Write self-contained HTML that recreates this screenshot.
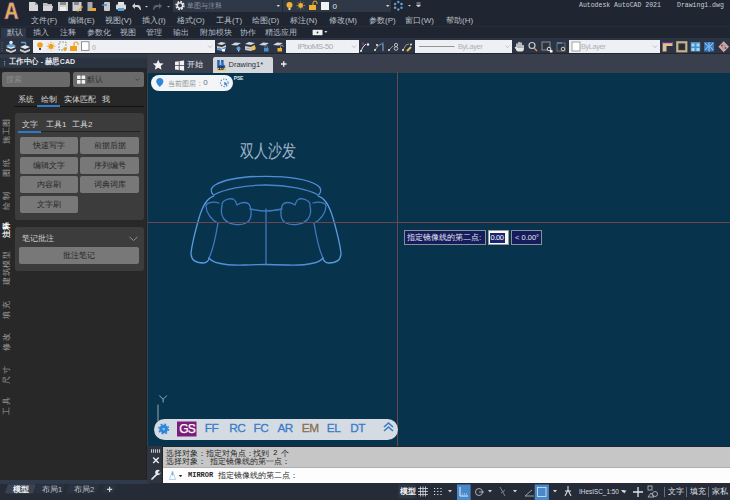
<!DOCTYPE html>
<html><head><meta charset="utf-8">
<style>
*{margin:0;padding:0;box-sizing:border-box}
html,body{width:730px;height:500px;overflow:hidden;background:#1f2631;font-family:"Liberation Sans",sans-serif;}
.a{position:absolute}
.t{position:absolute;white-space:nowrap;line-height:1}
#top{left:0;top:0;width:730px;height:26px;background:#1f2631}
#rtabs{left:0;top:26px;width:730px;height:12px;background:#1f2531;border-top:1px solid #262d38}
#tbar{left:0;top:38px;width:730px;height:15px;background:#2c3444}
#gap{left:0;top:53px;width:730px;height:1px;background:#20262f}
#phead{left:0;top:53.5px;width:147.5px;height:14.5px;background:#333b49;border-bottom:0}
#panel{left:0;top:68px;width:147px;height:412px;background:#282828;border-top:3px solid #22262c}
#ftabs{left:147px;top:53.5px;width:583px;height:19.5px;background:#393f4d}
#draw{left:148px;top:72.5px;width:582px;height:373.5px;background:#07344c;overflow:hidden}
#cmd{left:163px;top:447px;width:567px;height:21px;background:#c6c6c6;border-bottom:1px solid #b0b0b0}
#status{left:0;top:483px;width:730px;height:17px;background:#252c37}
.menu{color:#bcc1c8;font-size:8px}
.rt{color:#b4bac2;font-size:8px}
.combo{background:#eef0f3;}
.btn{position:absolute;background:#787878;border-radius:2px;color:#262626;font-size:8px;text-align:center;line-height:17px}
</style></head><body>
<!-- bars -->
<div id="top" class="a"></div>
<div id="rtabs" class="a"></div>
<div id="tbar" class="a"></div>
<div id="gap" class="a"></div>
<div id="ftabs" class="a"></div>
<div id="phead" class="a"></div>
<div class="a" style="left:0;top:57.5px;width:147px;height:11px;background:#2b3341"></div>
<div id="panel" class="a"></div>
<div id="draw" class="a"></div>
<div class="a" style="left:146px;top:73px;width:1px;height:407px;background:#222"></div><div class="a" style="left:147px;top:73px;width:1px;height:373px;background:#34434c"></div>
<div id="cmd" class="a"></div>
<div id="status" class="a"></div>
<div class="a" style="left:0;top:480px;width:149px;height:3.5px;background:#2f3a4b"></div>

<!-- logo -->
<svg class="a" style="left:0;top:0" width="26" height="24"><path d="M4.5 19L9.3 2.5h4.2L18.5 19h-3.4l-1.2-4.3H9.1L7.9 19zM10 11.8h3.2L11.6 6z" fill="#d8b455" fill-rule="evenodd" stroke="#7a2a9a" stroke-width="0.6"/></svg>

<!-- QAT -->
<div class="a" style="left:173px;top:0;width:109px;height:12px;background:#2f3847"></div>
<div class="a" style="left:283px;top:0;width:108px;height:12px;background:#2f3847"></div>
<div class="t" style="left:187px;top:2.3px;font-size:7.2px;color:#8a94a0">草图与注释</div>


<svg class="a" style="left:0;top:0" width="730" height="56" viewBox="0 0 730 56">
<!-- QAT icons -->
<!-- new -->
<path d="M29 2h6l3 3v6h-9z" fill="#d6d6d6"/><path d="M35 2v3h3" fill="#9a9a9a"/>
<!-- open -->
<path d="M43 3h4l1 1h4v2h-9z" fill="#bdbdbd"/><path d="M43 6h10l-1 5h-9z" fill="#d6d6d6"/>
<!-- save -->
<rect x="58" y="2" width="10" height="9" fill="#cfcfcf"/><rect x="60" y="2" width="6" height="3" fill="#8a8a8a"/><rect x="60" y="7" width="6" height="4" fill="#eee"/>
<!-- saveas -->
<rect x="72.5" y="2" width="9" height="9" fill="#cfcfcf"/><rect x="74" y="2" width="5" height="3" fill="#8a8a8a"/><path d="M77 11l5-5 1 1-5 5z" fill="#e8a53a"/>
<!-- publish -->
<rect x="87.5" y="2" width="5" height="9" fill="#aaa"/><path d="M90 8h6v3h-6z" fill="#e8a53a"/>
<!-- phone -->
<rect x="104" y="2" width="6" height="9" rx="1" fill="#c8c8c8"/><path d="M102 5h5" stroke="#3b8fd8" stroke-width="1.5"/>
<!-- print -->
<rect x="118" y="2" width="6" height="3" fill="#e6e6e6"/><rect x="116" y="4.5" width="10" height="5" rx="1" fill="#dcdcdc"/><rect x="118" y="8" width="6" height="3" fill="#5aa0e0"/>
<!-- undo -->
<path d="M132 6l3-3v2h3c2 0 3 2 3 5l-1 0c-1-2-2-3-3-3h-2v2z" fill="#d0d0d0"/>
<path d="M145 6h3l-1.5 1.5z" fill="#cfcfcf"/>
<path d="M162 6l-3-3v2h-3c-2 0-3 2-3 5l1 0c1-2 2-3 3-3h2v2z" fill="#5a6270"/>
<path d="M167 6h3l-1.5 1.5z" fill="#a0a4aa"/>
<!-- gear -->
<circle cx="180" cy="5.5" r="3.6" fill="none" stroke="#e8e8e8" stroke-width="2.2" stroke-dasharray="1.6 1.2"/>
<circle cx="180" cy="5.5" r="2.6" fill="none" stroke="#e8e8e8" stroke-width="1.4"/>
<path d="M276.5 5h3.5l-1.75 2z" fill="#d6d6d6"/>
<rect x="282" y="0" width="1" height="12" fill="#1f2631"/>
<!-- bulb sun lock -->
<circle cx="289.5" cy="5" r="3" fill="#f0b030"/><rect x="288.5" y="8" width="2" height="2" fill="#ddd"/>
<circle cx="300.7" cy="5.5" r="2.4" fill="#f0b030"/><path d="M303.70 5.50L304.70 5.50M302.82 7.62L303.53 8.33M300.70 8.50L300.70 9.50M298.58 7.62L297.87 8.33M297.70 5.50L296.70 5.50M298.58 3.38L297.87 2.67M300.70 2.50L300.70 1.50M302.82 3.38L303.53 2.67" stroke="#f0b030" stroke-width="0.9"/>
<rect x="309" y="5" width="7" height="5" fill="#f0b030"/><path d="M313 5v-2a2 2 0 0 1 4 0v1" stroke="#f0b030" fill="none" stroke-width="1"/>
<rect x="321" y="2" width="8" height="8" fill="#f2f2f2"/>
<text x="332.5" y="8.8" font-size="8" fill="#e0e0e0" font-family="Liberation Sans">0</text>
<path d="M386 5h3.5l-1.75 2z" fill="#d6d6d6"/>
<!-- network -->
<circle cx="398.30" cy="2.10" r="1.25" fill="#5a9ad8"/><circle cx="401.50" cy="3.95" r="1.25" fill="#6aa8e0"/><circle cx="401.50" cy="7.65" r="1.25" fill="#5a9ad8"/><circle cx="398.30" cy="9.50" r="1.25" fill="#5a9ad8"/><circle cx="395.10" cy="7.65" r="1.25" fill="#8a9ab0"/><circle cx="395.10" cy="3.95" r="1.25" fill="#5a9ad8"/>
<path d="M408 5h3l-1.5 1.5z" fill="#cfcfcf"/>
<path d="M416.5 3h4M416.5 5h4l-2 2z" stroke="#cfcfcf" fill="#cfcfcf" stroke-width="0.8"/>
</svg>

<!-- title -->
<div class="t" style="left:579px;top:3px;font-family:'Liberation Mono',monospace;font-size:6.5px;color:#c9ced6">Autodesk AutoCAD 2021</div>
<div class="t" style="left:677px;top:3px;font-family:'Liberation Mono',monospace;font-size:6.5px;color:#c9ced6">Drawing1.dwg</div>

<!-- menu -->
<div class="t menu" style="left:31px;top:16.5px">文件(F)</div>
<div class="t menu" style="left:68px;top:16.5px">编辑(E)</div>
<div class="t menu" style="left:105px;top:16.5px">视图(V)</div>
<div class="t menu" style="left:142px;top:16.5px">插入(I)</div>
<div class="t menu" style="left:177px;top:16.5px">格式(O)</div>
<div class="t menu" style="left:216px;top:16.5px">工具(T)</div>
<div class="t menu" style="left:252px;top:16.5px">绘图(D)</div>
<div class="t menu" style="left:290px;top:16.5px">标注(N)</div>
<div class="t menu" style="left:329px;top:16.5px">修改(M)</div>
<div class="t menu" style="left:369px;top:16.5px">参数(P)</div>
<div class="t menu" style="left:405px;top:16.5px">窗口(W)</div>
<div class="t menu" style="left:446px;top:16.5px">帮助(H)</div>

<!-- ribbon tabs -->
<div class="a" style="left:1px;top:27.5px;width:25px;height:10.5px;background:#2e3848"></div>
<div class="t rt" style="left:7px;top:29px">默认</div>
<div class="t rt" style="left:33px;top:29px">插入</div>
<div class="t rt" style="left:60px;top:29px">注释</div>
<div class="t rt" style="left:87px;top:29px">参数化</div>
<div class="t rt" style="left:120px;top:29px">视图</div>
<div class="t rt" style="left:146px;top:29px">管理</div>
<div class="t rt" style="left:173px;top:29px">输出</div>
<div class="t rt" style="left:200px;top:29px">附加模块</div>
<div class="t rt" style="left:240px;top:29px">协作</div>
<div class="t rt" style="left:265px;top:29px">精选应用</div>

<svg class="a" style="left:308px;top:28px" width="24" height="10"><rect x="4.6" y="1.8" width="9.9" height="5.4" fill="#f0f0f0"/><circle cx="9.5" cy="4.5" r="0.9" fill="#333"/><path d="M16.4 3h3l-1.5 2z" fill="#e0e0e0"/></svg>
<!-- toolbar combos -->
<div class="a combo" style="left:33px;top:40px;width:182px;height:13px"></div>
<div class="a combo" style="left:286px;top:40px;width:73px;height:13px"></div>
<div class="a combo" style="left:415px;top:40px;width:97px;height:13px"></div>
<div class="a combo" style="left:569px;top:40px;width:91px;height:13px"></div>
<div class="t" style="left:297.5px;top:43.2px;font-size:8px;letter-spacing:-0.55px;color:#a4a8ae">IPboMS-50</div>
<div class="t" style="left:458px;top:43px;font-size:7.5px;letter-spacing:-0.45px;color:#aeb2b8">ByLayer</div>
<div class="t" style="left:581px;top:43px;font-size:7.5px;letter-spacing:-0.45px;color:#aeb2b8">ByLayer</div>


<svg class="a" style="left:0;top:0" width="730" height="56" viewBox="0 0 730 56">
<!-- grip -->
<path d="M2 42v10" stroke="#5a6270" stroke-width="1" stroke-dasharray="1 1"/>
<!-- layer props icons -->
<path d="M6 47l5-2 5 2-5 2z" fill="#e8e8e8"/><path d="M6 49l5 2 5-2v2l-5 2-5-2z" fill="#d0d0d0"/><path d="M6 45.5l5-2 5 2-5 2z" fill="#5aa0e0"/><circle cx="11" cy="42.5" r="1.8" fill="#e8e8e8"/>
<path d="M20 47l5-2 5 2-5 2z" fill="#e8e8e8"/><path d="M20 49l5 2 5-2v2l-5 2-5-2z" fill="#d0d0d0"/><path d="M21 42.5h4l1 2" stroke="#5aa0e0" fill="none" stroke-width="1.4"/>
<!-- in combo -->
<circle cx="40" cy="45" r="2.8" fill="#f0a020"/><rect x="39" y="48" width="2" height="2" fill="#444"/>
<circle cx="51" cy="46.3" r="2.6" fill="#f0a020"/><path d="M54.20 46.30L55.40 46.30M53.26 48.56L54.11 49.41M51.00 49.50L51.00 50.70M48.74 48.56L47.89 49.41M47.80 46.30L46.60 46.30M48.74 44.04L47.89 43.19M51.00 43.10L51.00 41.90M53.26 44.04L54.11 43.19" stroke="#f0a020" stroke-width="1"/>
<rect x="59" y="42" width="7" height="8" fill="none" stroke="#888" stroke-width="0.8" stroke-dasharray="2 1"/><circle cx="65" cy="49" r="1.8" fill="#f0a020"/>
<rect x="70" y="46" width="7" height="5" fill="#f0a020"/><path d="M74 46v-2a2 2 0 0 1 4 0v1" stroke="#f0a020" fill="none" stroke-width="1.2"/>
<rect x="81.5" y="41.8" width="7.5" height="8.5" fill="#fff" stroke="#666" stroke-width="0.7"/>
<text x="92" y="49.5" font-size="7" fill="#aaa" font-family="Liberation Sans">0</text>
<path d="M208 45.6l2 2 2-2" stroke="#a8acb2" fill="none" stroke-width="0.7"/>
<!-- layer tool icons -->
<path d="M217 44l4-2 5 1-4 2z" fill="#ddd"/><path d="M217 46l5 1 4-2v2l-4 2-5-1z" fill="#ccc"/><path d="M217 48l5 1 4-2v2l-4 2-5-1z" fill="#5aa0e0"/><rect x="222" y="49" width="3" height="2.5" fill="#fff"/>
<path d="M231 45l4-2.5 6 0.5-4 2.5z" fill="#d6d6d6"/><circle cx="238.5" cy="48.5" r="2" fill="#5aa0e0"/><rect x="238" y="50" width="1.2" height="1.5" fill="#ddd"/>
<path d="M245 44l4-2 6 1-4 2z" fill="#ddd"/><path d="M245 46l6 1 4-2v2l-4 2-6-1z" fill="#ccc"/><path d="M245 48l6 1 4-2v2l-4 2-6-1z" fill="#ccc"/><circle cx="253.5" cy="48" r="2.2" fill="#f0c040"/>
<path d="M259 45l4-2.5 6 0.5-4 2.5z" fill="#d6d6d6"/><rect x="264" y="48" width="4.5" height="3.5" fill="#4a90d0"/><path d="M265 48v-1.2a1.2 1.2 0 0 1 2.4 0v1.2" stroke="#4a90d0" fill="none" stroke-width="0.8"/>
<path d="M273 45l4-2.5 6 0.5-4 2.5z" fill="#d6d6d6"/><rect x="277.5" y="48" width="4.5" height="3.5" fill="#f0b030"/><path d="M280.5 48v-1.5a1.3 1.3 0 0 1 2.6 0v0.5" stroke="#aaa" fill="none" stroke-width="0.8"/>
<path d="M352 45.6l2 2 2-2" stroke="#a8acb2" fill="none" stroke-width="0.7"/>
<!-- misc icons -->
<path d="M361 51l2-4 3-3" stroke="#ddd" fill="none" stroke-width="1"/><circle cx="363" cy="44" r="1.4" fill="#8a3070"/><circle cx="368" cy="44.5" r="1.2" fill="#eee"/><circle cx="361" cy="51" r="1" fill="#eee"/>
<path d="M375 50l3-4 3-2 2 0v7" stroke="#aaa" fill="none" stroke-width="0.8"/><path d="M383 42v9" stroke="#4a90d0" stroke-width="0.8"/><circle cx="375" cy="50" r="1" fill="#eee"/><circle cx="377" cy="45" r="1" fill="#eee"/>
<path d="M389 50l4-4" stroke="#aaa" fill="none" stroke-width="0.8"/><circle cx="389" cy="50" r="1" fill="#eee"/><circle cx="396" cy="45" r="1.6" fill="none" stroke="#ccc" stroke-width="0.9"/><circle cx="396" cy="48.5" r="1.8" fill="none" stroke="#ccc" stroke-width="0.9"/>
<path d="M403 50l3-5 3-1" stroke="#aaa" fill="none" stroke-width="0.8"/><circle cx="403" cy="50" r="1" fill="#eee"/><path d="M407 51l4-4" stroke="#f0c040" stroke-width="1.8"/><circle cx="411" cy="44.5" r="1" fill="#eee"/>
<!-- linetype combo -->
<path d="M419 46.5h35.5" stroke="#8a8a8a" stroke-width="0.9"/>
<path d="M505.5 45.6l2 2 2-2" stroke="#a8acb2" fill="none" stroke-width="0.7"/>
<!-- hand -->
<g stroke="#e6e6e6" stroke-linecap="round" stroke-width="1.5" fill="none"><path d="M517 48v-4M519 47.5v-5M521 47.5v-4.5M523 48.5v-3M515.5 47.5l1.5 2"/></g><path d="M516 48h7.8v1.5c0 1-1 2-2 2h-3.5c-1 0-2-1-2.3-2z" fill="#e6e6e6"/>
<circle cx="532" cy="45.5" r="3" fill="none" stroke="#ccc" stroke-width="1.2"/><path d="M534 48l3 3" stroke="#d0a060" stroke-width="1.3"/>
<rect x="542" y="42" width="8" height="8" fill="none" stroke="#999" stroke-width="0.9"/><circle cx="549" cy="49" r="1.8" fill="#333" stroke="#eee" stroke-width="0.9"/><rect x="550" y="50" width="2.5" height="2.5" fill="#fff"/>
<rect x="557" y="43" width="8" height="8" fill="none" stroke="#777" stroke-width="0.9"/><path d="M557 43h5" stroke="#4a90d0" stroke-width="1.4"/><circle cx="563" cy="49" r="1.8" fill="#333" stroke="#ddd" stroke-width="0.9"/>
<!-- color combo -->
<rect x="572" y="42" width="8" height="9" fill="#fff" stroke="#999" stroke-width="0.9"/>
<path d="M653 45.6l2 2 2-2" stroke="#a8acb2" fill="none" stroke-width="0.7"/>
<!-- right icons -->
<path d="M662.5 42h10v4h-6v5.5h-4z" fill="#dcc490"/><path d="M662.5 42h10v1.2h-10z" fill="#6a2a8a"/><path d="M662.5 42v9.5" stroke="#7a3a8a" stroke-width="0.6"/>
<rect x="677.3" y="42.3" width="9" height="9" fill="none" stroke="#c8b08a" stroke-width="2.2"/><rect x="679.6" y="44.6" width="4.4" height="4.4" fill="#2a2a30"/>
<rect x="690.7" y="42" width="9.6" height="9.5" fill="#4a90c8"/><path d="M691.5 43.5h3v3h-3zM696.5 43.5h3v3h-3zM691.5 48h3v3h-3zM696.5 48h3v3h-3z" fill="#a8d8f0"/>
<rect x="704.1" y="42" width="10" height="9.5" fill="#3a7cc4"/><path d="M705 43l3 3.5-3 3.5M713 43l-3 3.5 3 3.5M709 42.5v9" stroke="#a0d0f0" stroke-width="1" fill="none"/>
<path d="M723.7 41.2l5.3 5.5-5.3 5.5-5.3-5.5z" fill="#c8aca4"/><circle cx="722" cy="45.5" r="1" fill="#8a3a8a"/><circle cx="725.5" cy="48" r="1" fill="#8a3a8a"/><circle cx="723.7" cy="46.7" r="1.6" fill="none" stroke="#9a7070" stroke-width="0.6"/>
</svg>

<!-- panel header -->
<div class="t" style="left:9px;top:58px;font-size:7.5px;color:#e4e8ec;font-weight:bold;transform-origin:0 0;transform:scaleX(0.93)">工作中心 - 赫思CAD</div>

<!-- panel content -->
<div class="a" style="left:2px;top:72px;width:68px;height:15px;background:#6a6a6a;border-radius:2px"></div>
<div class="t" style="left:6px;top:76px;font-size:8px;color:#8c8c8c">搜索</div>
<div class="a" style="left:73px;top:72px;width:71px;height:15px;background:#6a6a6a;border-radius:2px"></div>
<div class="t" style="left:87px;top:76px;font-size:8px;color:#333">默认</div>
<svg class="a" style="left:72px;top:72px" width="75" height="16"><rect x="5" y="3.5" width="3.6" height="3.6" rx="0.6" fill="#f0f0f0"/><rect x="9.6" y="3.5" width="3.6" height="3.6" rx="0.6" fill="#f0f0f0"/><rect x="5" y="8.1" width="3.6" height="3.6" rx="0.6" fill="#f0f0f0"/><rect x="9.6" y="8.1" width="3.6" height="3.6" rx="0.6" fill="#f0f0f0"/><path d="M63.5 6.5l2 2 2-2" stroke="#3a3a3a" stroke-width="0.8" fill="none"/></svg>
<svg class="a" style="left:2px;top:60px" width="5" height="7"><path d="M2.5 1v5" stroke="#8a94a0" stroke-width="1.2" stroke-dasharray="1 0.8"/></svg>
<div class="t" style="left:18px;top:96px;font-size:8px;color:#d8d8d8">系统</div>
<div class="t" style="left:41px;top:96px;font-size:8px;color:#d8d8d8">绘制</div>
<div class="t" style="left:64px;top:96px;font-size:8px;color:#d8d8d8">实体匹配</div>
<div class="t" style="left:102px;top:96px;font-size:8px;color:#d8d8d8">我</div>
<div class="a" style="left:14px;top:106px;width:130px;height:1px;background:#111"></div>
<div class="a" style="left:37px;top:105px;width:23px;height:2px;background:#2f7ac8"></div>

<div class="a" style="left:15px;top:113px;width:129px;height:107px;background:#3c3c3c;border-radius:3px"></div>
<div class="t" style="left:22px;top:121px;font-size:8px;color:#d8d8d8">文字</div>
<div class="t" style="left:46px;top:121px;font-size:8px;color:#d8d8d8">工具1</div>
<div class="t" style="left:72px;top:121px;font-size:8px;color:#d8d8d8">工具2</div>
<div class="a" style="left:18px;top:131px;width:122px;height:1px;background:#222"></div>
<div class="a" style="left:18px;top:131px;width:23px;height:2px;background:#2f7ac8"></div>
<div class="btn" style="left:20px;top:137px;width:58px;height:17px">快速写字</div>
<div class="btn" style="left:80px;top:137px;width:59px;height:17px">前据后据</div>
<div class="btn" style="left:20px;top:157px;width:58px;height:17px">编辑文字</div>
<div class="btn" style="left:80px;top:157px;width:59px;height:17px">序列编号</div>
<div class="btn" style="left:20px;top:176px;width:58px;height:17px">内容刷</div>
<div class="btn" style="left:80px;top:176px;width:59px;height:17px">词典词库</div>
<div class="btn" style="left:20px;top:196px;width:58px;height:17px">文字刷</div>

<div class="a" style="left:15px;top:227px;width:129px;height:44px;background:#3c3c3c;border-radius:3px"></div>
<div class="t" style="left:21.5px;top:235px;font-size:8px;color:#d0d0d0">笔记批注</div>
<div class="btn" style="left:19px;top:247px;width:120px;height:17px">批注笔记</div>
<svg class="a" style="left:128px;top:235px" width="12" height="8"><path d="M1.5 2l4 3.5 4-3.5" stroke="#9a9a9a" stroke-width="0.9" fill="none"/></svg>

<!-- drawing -->
<svg class="a" style="left:148px;top:72px" width="582" height="374" viewBox="148 72 582 374">
<g fill="none" stroke="#4f8fd6" stroke-width="1.3" stroke-linecap="round" stroke-linejoin="round">
<g id="half">
<path d="M266 176.3 C248 176.3 226 178.5 215 185 C211 187.5 210 191 213 194.5"/>
<path d="M213.5 195 C224 189.5 244 185 266 185" stroke="#4a84c8"/>
<path d="M214 196 C207 198 203 205 199 218 C195 232 192 244 191 253 C191 259 195 263 203 263 C207 263 209 260 209 258" stroke="#5a9ae0"/>
<path d="M219 203 C212 201 206 203 206 206 C206 212 211 220 218 223" stroke="#3f78bd"/>
<path d="M218 223 C216 235 213 250 209 258" stroke="#3f78bd"/>
<path d="M209 258 C213 263.5 228 265.5 245 265 C254 264.7 260 264.5 266 264.5"/>
<path d="M222 206 C221 201 228 198 233 199 C236 200 236 203 237 205 C241 202 248 201 250 206 C252 212 252 220 246 223 C240 226 229 225 224 219 C221 215 221 210 222 206 Z" stroke="#3f78bd"/>
<path d="M250 209 C255 210 261 211 266 211" stroke="#3f78bd"/>
</g>
<use href="#half" transform="translate(532,0) scale(-1,1)"/>
<path d="M266 209 V264" stroke="#3f78bd"/>
</g>
<rect x="397" y="72" width="1" height="374" fill="#6c4552"/>
<rect x="148" y="222" width="582" height="1" fill="#6c4552"/>
<path d="M158 404.5 V421" stroke="#b8c4d0" stroke-width="0.8"/>
<path d="M159.3 395.5l3.8 3.8 3.8-3.8M163.1 399.3v3.2" stroke="#c0ccd8" stroke-width="0.8" fill="none"/>
</svg>
<div class="t" style="left:240px;top:141.8px;font-size:14px;color:#a0b2c8;transform-origin:0 0;transform:scaleY(1.28)">双人沙发</div>
<!-- file tabs -->
<div class="a" style="left:213px;top:57px;width:60px;height:16px;background:#d4d8dd;border-radius:2px 2px 0 0"></div>
<div class="t" style="left:228.5px;top:61px;font-size:7.5px;color:#2a2f38">Drawing1*</div>
<div class="t" style="left:187px;top:61px;font-size:7.5px;color:#e8ecf0">开始</div>
<svg class="a" style="left:148px;top:53px" width="160" height="45" viewBox="148 53 160 45">
<path d="M158.2 59.8l1.6 3.4 3.8 0.4-2.9 2.5 0.9 3.7-3.4-2-3.4 2 0.9-3.7-2.9-2.5 3.8-0.4z" fill="#f4f4f4"/>
<path d="M175 61.8l3.8-0.6v4h-3.8zM179.6 61.1l4.5-0.7v4.8h-4.5zM175 66h3.8v4l-3.8-0.6zM179.6 66h4.5v4.8l-4.5-0.7z" fill="#f0f0f0"/>
<path d="M217.2 60h2.6v3h1.2v-3h2.6v4.5l1.6 1v3h-8z" fill="#2a64b0"/><rect x="219.5" y="62.5" width="2" height="2.5" fill="#8ab8e8"/><path d="M216.5 70.5l1.5-2.5h7l1.5 2.5z" fill="#f0c050"/>
<text x="217.8" y="70.3" font-size="5.5" fill="#111" font-family="Liberation Sans" font-weight="bold">10</text>
<path d="M281 64h5.5M283.75 61.25v5.5" stroke="#f0f0f0" stroke-width="1.3"/>
<rect x="151" y="75" width="82" height="16" rx="8" fill="#f3f5f7"/>
<path d="M159.8 78c2 0 3.6 1.5 3.6 3.4 0 2.2-2.2 3.6-3.6 5.6-1.4-2-3.6-3.4-3.6-5.6 0-1.9 1.6-3.4 3.6-3.4z" fill="#2f86d8"/>
<circle cx="224.3" cy="82.8" r="3.8" fill="none" stroke="#3a8ad8" stroke-width="1.1" stroke-dasharray="1.3 1.4"/>
<path d="M224 82l3.3 1.2-1.3 0.6 1.4 1.4-0.7 0.7-1.4-1.4-0.6 1.3z" fill="#2a7ad0"/>
<text x="233.8" y="79.8" font-size="5" fill="#dce4ec" font-family="Liberation Sans" font-weight="bold" letter-spacing="-0.2">PSE</text>
</svg>
<div class="t" style="left:167.5px;top:79.7px;font-size:7.2px;color:#8a8e94">当前图层</div><div class="t" style="left:198.8px;top:80px;font-size:7.5px;color:#7a7e84">:</div><div class="t" style="left:203.2px;top:79.3px;font-size:8px;color:#6a6e74">0</div>

<!-- tooltip -->
<div class="a" style="left:404px;top:230px;width:82px;height:15px;background:#141c5c;border:1px solid #8a8f9a"></div>
<div class="t" style="left:407px;top:233.5px;font-size:8px;color:#e6e8f0">指定镜像线的第二点:</div>
<div class="a" style="left:488px;top:230px;width:21px;height:15px;background:#fafafa;border:1px solid #9a9a9a"></div>
<div class="a" style="left:490px;top:232.5px;width:15px;height:10px;background:#1a2470"></div>
<div class="t" style="left:490.5px;top:234px;font-size:7.5px;color:#ffffff;letter-spacing:-0.4px">0.00</div>
<div class="a" style="left:511px;top:230px;width:31px;height:15px;background:#141c5c;border:1px solid #8a8f9a"></div>
<div class="t" style="left:515px;top:234px;font-size:7.5px;color:#e6e8f0">&lt; 0.00°</div>
<!-- pill toolbar -->
<div class="a" style="left:154px;top:418.5px;width:244px;height:21px;background:#d4dbe2;border-radius:10.5px"></div>
<svg class="a" style="left:154px;top:418px" width="244" height="22" viewBox="154 418 244 22">
<circle cx="163.7" cy="429" r="4.3" fill="#2f86d8"/><circle cx="163.7" cy="429" r="4.9" fill="none" stroke="#2f86d8" stroke-width="1.4" stroke-dasharray="1.9 1.95"/><circle cx="163.7" cy="429" r="1.3" fill="#8ec0f0"/>
<rect x="177" y="421.5" width="19.5" height="15" fill="#7a1c78"/>
<path d="M384 431l4.5-4 4.5 4M384 427l4.5-4 4.5 4" stroke="#3a7bc8" stroke-width="1.6" fill="none"/>
</svg>
<div class="t" style="left:179.3px;top:422.6px;font-size:12px;letter-spacing:-0.9px;-webkit-text-stroke:0.25px #fff;color:#ffffff">GS</div>
<div class="t" style="left:204.8px;top:423px;font-size:11.8px;letter-spacing:-0.5px;-webkit-text-stroke:0.3px #3a7bc8;color:#3a7bc8">FF</div>
<div class="t" style="left:229.2px;top:423px;font-size:11.8px;letter-spacing:-0.5px;-webkit-text-stroke:0.3px #3a7bc8;color:#3a7bc8">RC</div>
<div class="t" style="left:253.6px;top:423px;font-size:11.8px;letter-spacing:-0.5px;-webkit-text-stroke:0.3px #3a7bc8;color:#3a7bc8">FC</div>
<div class="t" style="left:277.5px;top:423px;font-size:11.8px;letter-spacing:-0.5px;-webkit-text-stroke:0.3px #3a7bc8;color:#3a7bc8">AR</div>
<div class="t" style="left:301.8px;top:423px;font-size:11.8px;letter-spacing:-0.5px;-webkit-text-stroke:0.3px #8a6e50;color:#8a6e50">EM</div>
<div class="t" style="left:326.8px;top:423px;font-size:11.8px;letter-spacing:-0.5px;-webkit-text-stroke:0.3px #3a7bc8;color:#3a7bc8">EL</div>
<div class="t" style="left:350.3px;top:423px;font-size:11.8px;letter-spacing:-0.5px;-webkit-text-stroke:0.3px #3a7bc8;color:#3a7bc8">DT</div>
<!-- command line -->
<div class="a" style="left:147px;top:446px;width:16px;height:37px;background:#2e3440;border-right:1px solid #22262c"></div>
<div class="a" style="left:163px;top:468px;width:567px;height:15px;background:#fdfdfd"></div>
<svg class="a" style="left:148px;top:446px" width="40" height="37" viewBox="148 446 40 37">
<path d="M151.5 449.3v3.4M153.5 449.3v3.4M155.5 449.3v3.4M157.5 449.3v3.4M159.5 449.3v3.4" stroke="#c0c4ca" stroke-width="1.1"/>
<path d="M153.2 457.5l5.5 5.6M158.7 457.5l-5.5 5.6" stroke="#eceef2" stroke-width="1.4"/>
<path d="M152 479l5.2-5.2" stroke="#e8eaee" stroke-width="1.7" stroke-linecap="round"/><path d="M156.3 474.6a2.6 2.6 0 1 1 3.6 -3.6l-1.6 0.6-0.2 1.6 1.5 0.2 0.9-1.2a2.6 2.6 0 0 1-4.2 2.4z" fill="#e8eaee"/>
<path d="M172.5 471.5l-3.2 8h6.4z" fill="none" stroke="#a8c8e8" stroke-width="0.8"/><path d="M172.5 471.5v4" stroke="#7ab0e0" stroke-width="1.4"/>
<path d="M178.6 475h3.8l-1.9 2.2z" fill="#333"/>
</svg>
<div class="t" style="left:165.5px;top:449.5px;font-size:7.7px;color:#262626">选择对象：</div>
<div class="t" style="left:205.9px;top:449.5px;font-size:7.7px;color:#262626">指定对角点：</div>
<div class="t" style="left:253px;top:449.5px;font-size:7.7px;color:#262626">找到</div>
<div class="t" style="left:273px;top:449.5px;font-size:7.7px;color:#262626;font-family:'Liberation Mono',monospace">2</div>
<div class="t" style="left:281px;top:449.5px;font-size:7.7px;color:#262626">个</div>
<div class="t" style="left:165.5px;top:458.3px;font-size:7.7px;color:#262626">选择对象：</div>
<div class="t" style="left:210px;top:458.3px;font-size:7.7px;color:#262626">指定镜像线的第一点：</div>
<div class="t" style="left:188px;top:471.7px;font-size:7px;color:#262626;font-weight:bold;font-family:'Liberation Mono',monospace">MIRROR</div>
<div class="t" style="left:217.5px;top:471.7px;font-size:7.7px;color:#262626">指定镜像线的第二点：</div>
<!-- status -->
<svg class="a" style="left:0;top:483px" width="730" height="17" viewBox="0 483 730 17">
<rect x="0" y="483" width="149" height="0.6" fill="#2f3a4b"/>
<path d="M9 484.3h25.5c1 0 1.5 0.6 1.2 1.4l-2.4 7c-0.3 0.6-0.8 0.9-1.5 0.9h-25.3c-1 0-1.5-0.6-1.2-1.4l2.4-7c0.3-0.6 0.8-0.9 1.5-0.9z" fill="#3a4352"/>
<path d="M38 484.3h25.5c1 0 1.5 0.6 1.2 1.4l-2.4 7c-0.3 0.6-0.8 0.9-1.5 0.9h-25.3c-1 0-1.5-0.6-1.2-1.4l2.4-7c0.3-0.6 0.8-0.9 1.5-0.9z" fill="#2a3240"/>
<path d="M70 484.3h27.5c1 0 1.5 0.6 1.2 1.4l-2.4 7c-0.3 0.6-0.8 0.9-1.5 0.9h-27.3c-1 0-1.5-0.6-1.2-1.4l2.4-7c0.3-0.6 0.8-0.9 1.5-0.9z" fill="#2a3240"/>
<path d="M106 484.6h9.5c1 0 1.5 0.6 1.2 1.4l-2.4 6.3c-0.3 0.6-0.8 0.9-1.5 0.9h-9.3c-1 0-1.5-0.6-1.2-1.4l2.4-6.3c0.3-0.6 0.8-0.9 1.5-0.9z" fill="#2a3240"/>
<path d="M107 489.3h5.2M109.6 486.7v5.2" stroke="#d0d4da" stroke-width="1.2"/>
<!-- right status -->
<rect x="398.3" y="484.2" width="17" height="14.2" fill="#2e3644"/>
<path d="M418 488.5h10M418 491.5h10M418 494.5h10M420.5 486.5v10M423 486.5v10M425.5 486.5v10" stroke="#d8dce2" stroke-width="0.8"/>
<path d="M434 488.5h1.2M437.2 488.5h1.2M440.4 488.5h1.2M434 491.5h1.2M437.2 491.5h1.2M440.4 491.5h1.2M434 494.5h1.2M437.2 494.5h1.2M440.4 494.5h1.2" stroke="#e0e4ea" stroke-width="1.2"/>
<path d="M448 490h4l-2 2.5z" fill="#d0d4da"/>
<rect x="457" y="484.5" width="13.6" height="15.5" fill="#4a88cc"/>
<path d="M460 487v9h8" stroke="#e8f0f8" stroke-width="1" fill="none"/><path d="M462 494h1M464 494h1M466 494h1" stroke="#e8f0f8" stroke-width="0.8"/>
<circle cx="479" cy="492" r="3.5" fill="none" stroke="#b8bcc2" stroke-width="0.9"/><path d="M479 492h5" stroke="#b8bcc2" stroke-width="0.9"/>
<path d="M488 490h4l-2 2.5z" fill="#d0d4da"/>
<path d="M500 487l5 9M501 493l4-3" stroke="#8a8e94" stroke-width="0.9"/>
<path d="M513 490h4l-2 2.5z" fill="#d0d4da"/>
<path d="M525 496h9M525 496l7-6" stroke="#a8acb2" stroke-width="0.9"/>
<rect x="534.7" y="484.5" width="14.2" height="15.5" fill="#4a88cc"/>
<rect x="537.5" y="487.5" width="8.5" height="9" fill="none" stroke="#dce8f4" stroke-width="0.8"/>
<path d="M553 490h4l-2 2.5z" fill="#d0d4da"/>
<path d="M568 486v4l-3 6M568 490l3 6M565 491h6" stroke="#d8dce2" stroke-width="1.1" fill="none"/>
<path d="M621 490h4l-2 2.5z" fill="#d0d4da"/>
<path d="M633 492h10M638 487v10" stroke="#e0e4ea" stroke-width="1.3"/>
<rect x="648" y="486" width="4" height="4" fill="none" stroke="#c0c4ca" stroke-width="0.8"/><circle cx="655" cy="494" r="2.5" fill="none" stroke="#c0c4ca" stroke-width="0.8"/><path d="M648 497l3-4 3 4z" fill="none" stroke="#c0c4ca" stroke-width="0.8"/>
<path d="M664.5 487v10M686.5 487v10M708.5 487v10" stroke="#7a8088" stroke-width="0.8"/>
</svg>
<div class="t" style="left:13px;top:485.5px;font-size:7.5px;color:#f0f2f4;font-weight:bold">模型</div>
<div class="t" style="left:42px;top:485.5px;font-size:7.5px;color:#c0c4ca">布局1</div>
<div class="t" style="left:74px;top:485.5px;font-size:7.5px;color:#c0c4ca">布局2</div>
<div class="t" style="left:399.5px;top:487.5px;font-size:7.5px;color:#f0f2f4;font-weight:bold">模型</div>
<div class="t" style="left:578.5px;top:488px;font-size:8px;color:#d8dce2;transform-origin:0 0;transform:scaleX(0.8)">IHesISC_1:50</div>
<svg class="a" style="left:620.5px;top:489.5px" width="8" height="5"><path d="M1 0.5h4.5l-2.25 3z" fill="#d0d4da"/></svg>
<div class="t" style="left:668px;top:488px;font-size:7.5px;color:#e0e4ea">文字</div>
<div class="t" style="left:690px;top:488px;font-size:7.5px;color:#e0e4ea">填充</div>
<div class="t" style="left:712px;top:488px;font-size:7.5px;color:#e0e4ea">家私</div>
<!-- vertical tabs -->
<div class="t" style="left:2.5px;top:143.9px;font-size:8px;letter-spacing:0.53px;color:#a0a0a0;font-weight:normal;transform-origin:0 0;transform:rotate(-90deg)">施工图</div>
<div class="t" style="left:2.5px;top:177.2px;font-size:8px;letter-spacing:1.70px;color:#a0a0a0;font-weight:normal;transform-origin:0 0;transform:rotate(-90deg)">图纸</div>
<div class="t" style="left:2.5px;top:209.8px;font-size:8px;letter-spacing:2.50px;color:#a0a0a0;font-weight:normal;transform-origin:0 0;transform:rotate(-90deg)">绘制</div>
<div class="t" style="left:2.5px;top:238.2px;font-size:8px;letter-spacing:0.50px;color:#f8f8f8;font-weight:bold;transform-origin:0 0;transform:rotate(-90deg)">注释</div>
<div class="t" style="left:2.5px;top:285.3px;font-size:8px;letter-spacing:0.60px;color:#a0a0a0;font-weight:normal;transform-origin:0 0;transform:rotate(-90deg)">建筑模型</div>
<div class="t" style="left:2.5px;top:318.9px;font-size:8px;letter-spacing:1.75px;color:#a0a0a0;font-weight:normal;transform-origin:0 0;transform:rotate(-90deg)">填充</div>
<div class="t" style="left:2.5px;top:350.5px;font-size:8px;letter-spacing:1.80px;color:#a0a0a0;font-weight:normal;transform-origin:0 0;transform:rotate(-90deg)">修改</div>
<div class="t" style="left:2.5px;top:383.9px;font-size:8px;letter-spacing:2.50px;color:#a0a0a0;font-weight:normal;transform-origin:0 0;transform:rotate(-90deg)">尺寸</div>
<div class="t" style="left:2.5px;top:414.9px;font-size:8px;letter-spacing:1.70px;color:#a0a0a0;font-weight:normal;transform-origin:0 0;transform:rotate(-90deg)">工具</div>
</body></html>
